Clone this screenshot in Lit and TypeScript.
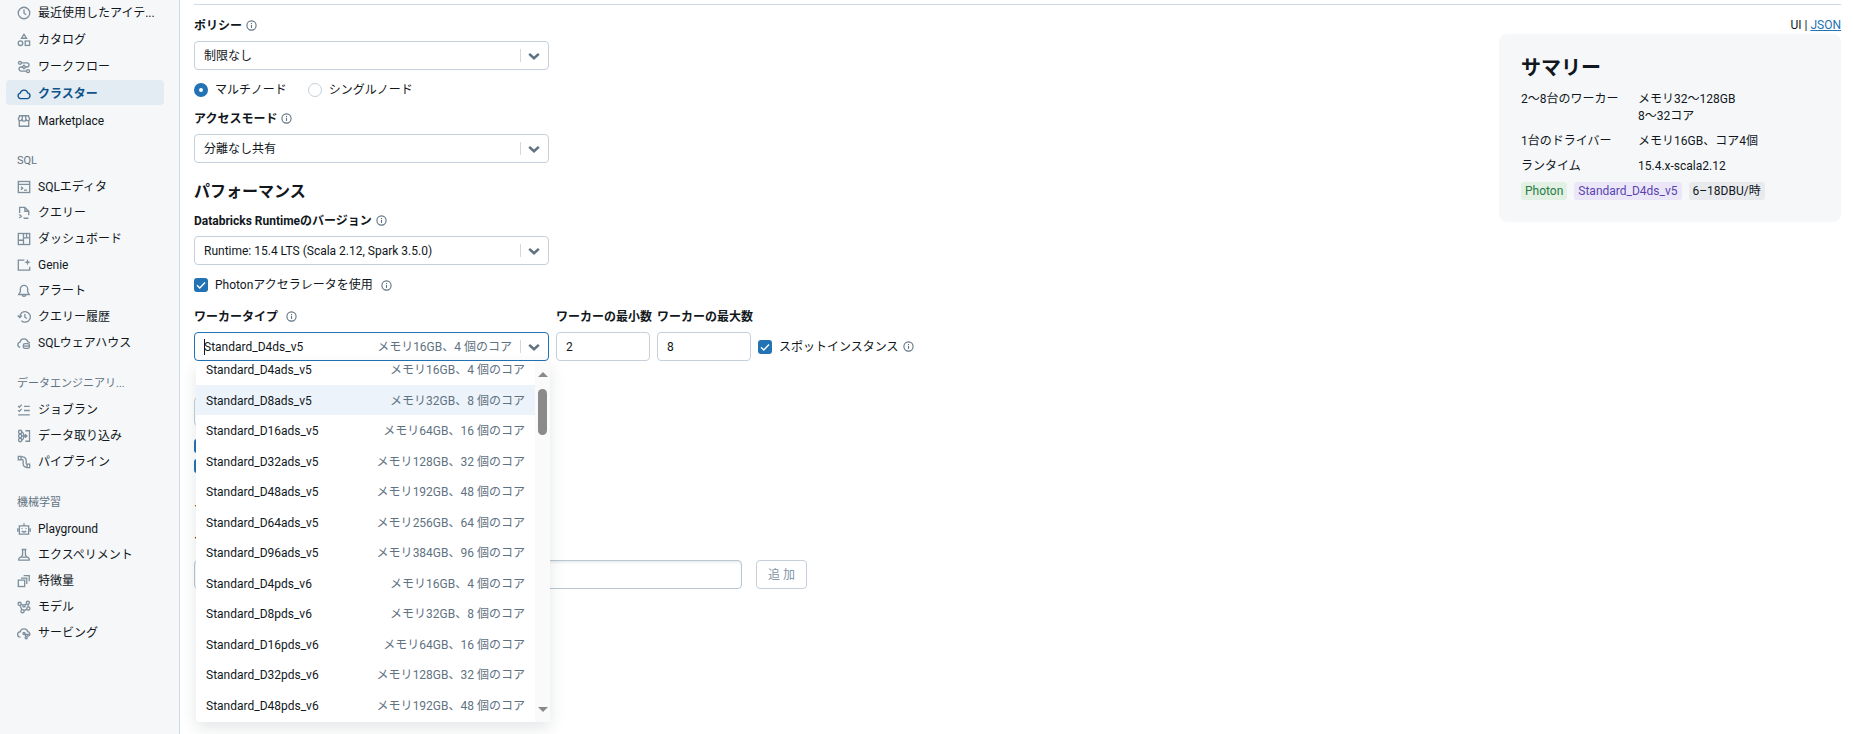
import { LitElement, html, css, svg, nothing } from "lit";
import { customElement, property, state } from "lit/decorators.js";
import { classMap } from "lit/directives/class-map.js";

const icons: Record<string, unknown> = {
  clock: svg`<circle cx="8" cy="8" r="6.6"/><path d="M8 4v4.2l2.6 1.8"/>`,
  catalog: svg`<path d="M8 1.4 10.9 6H5.100z"/><circle cx="4" cy="11.700" r="2.600"/><rect x="9.400" y="9.200" width="5" height="5"/>`,
  workflow: svg`<circle cx="3.400" cy="3.200" r="1.700"/><circle cx="12.600" cy="12.800" r="1.700"/><path d="M5.100 3.200h6.200a2.400 2.400 0 0 1 0 4.800H4.700a2.400 2.400 0 0 0 0 4.800h6.200"/><path d="m8 5.900 2.100 2.100L8 10.100 5.900 8z" fill="#f6f7f9"/>`,
  cloud: svg`<path d="M4.200 13.200a3.200 3.200 0 0 1-.5-6.300 4.400 4.400 0 0 1 8.500-.2 3.300 3.300 0 0 1-.2 6.500z"/>`,
  store: svg`<path d="M2.600 7.500V14h10.800V7.500M3 2h10l1.400 3.600a2 2 0 0 1-2.100 2 2.100 2.100 0 0 1-2.100-1.600 2.200 2.200 0 0 1-4.400 0 2.100 2.100 0 0 1-2.100 1.600 2 2 0 0 1-2.100-2zM5.800 6l.5-4M10.200 6l-.5-4"/>`,
  sql: svg`<rect x="1.500" y="1.700" width="13" height="12.600"/><path d="M1.500 5h13M4.500 7.600l2 1.700-2 1.700M8 11.600h3.500"/>`,
  query: svg`<path d="M3 8V1.500h6L13.400 6v4.500M9 1.500V6h4.400M2.600 9.800l2.400 2-2.400 2M7.500 14h5.500"/>`,
  dashboard: svg`<rect x="1.500" y="1.700" width="13" height="12.600"/><path d="M7.400 1.700v12.600M1.500 9.400h5.900M7.400 6.800h7.100M11 6.800V1.700"/>`,
  genie: svg`<path d="M8.500 2.500h-7v11.300h13V10"/><path d="M12 1.200l1 2.600 2.700 1-2.700 1-1 2.700-1-2.700-2.700-1 2.700-1z" fill="currentColor" stroke="none"/>`,
  bell: svg`<path d="M8 1.600a4.200 4.200 0 0 0-4.200 4.200v3L2 12h12l-1.800-3.200v-3A4.200 4.200 0 0 0 8 1.600zM6 12.200a2 2 0 0 0 4 0"/>`,
  history: svg`<path d="M3.200 8a6 6 0 1 1 1.800 4.200M.8 6.200 3.200 8.600l2.300-2.400M9 4.600v3.700l2.300 1.500"/>`,
  warehouse: svg`<path d="M3.600 13a3.100 3.100 0 0 1-.2-6.100 4.600 4.600 0 0 1 8.900-.4 3 3 0 0 1 2.200 1.800"/><rect x="7.200" y="8.800" width="7" height="5.400" rx="2"/><path d="M7.200 11.500h7"/>`,
  checks: svg`<path d="m1.300 3.400 1.400 1.400 2.600-2.900M1.300 8.200l1.400 1.400 2.600-2.900M8 3.800h6.600M8 8.600h6.600M1.300 13.600h13.300"/>`,
  ingest: svg`<circle cx="3.600" cy="3.300" r="1.900"/><circle cx="3.600" cy="8" r="1.900"/><circle cx="3.600" cy="12.700" r="1.900"/><path d="M5.500 3.300c2.500 0 1.500 4.700 3.500 4.700M5.500 12.700C8 12.700 7 8 9 8M5.500 8H11M9.500 2h4.800v12H9.500M9.300 6l2 2-2 2"/>`,
  pipeline: svg`<path d="M1.500 1.500h3v4h-3zM11.500 10.500h3v4h-3zM4.500 2.200h2a4 4 0 0 1 4 4v3.300a1.500 1.500 0 0 0 1 1.400M4.500 5h1a1.500 1.500 0 0 1 1.500 1.500V10a4 4 0 0 0 4.500 4"/>`,
  robot: svg`<path d="M2.700 4.400h10.600v9.400H2.700zM8 4.400V1.500M.9 7.200v4M15.100 7.200v4M5.500 10.200c1.400 1.300 3.600 1.300 5 0"/><path d="M5.700 7v1M10.300 7v1" stroke-width="1.600"/>`,
  flask: svg`<path d="M5.300 1.700h5.400M6.400 1.700v6.100L4.600 10.500h6.800L9.600 7.800V1.700M4.600 10.500c-1.700 0-2.600.9-2.600 3.300h12c0-2.400-.9-3.300-2.600-3.300"/>`,
  features: svg`<rect x="1.500" y="7" width="7.300" height="7.300"/><path d="M4.500 4.700h6.700v6.600M7.600 1.900H14v6.500"/>`,
  model: svg`<circle cx="3" cy="4.400" r="1.800"/><circle cx="12.400" cy="3.200" r="1.800"/><circle cx="13" cy="9.600" r="1.800"/><circle cx="6.300" cy="12.800" r="1.800"/><circle cx="8" cy="6.600" r="1.400"/><path d="m4.700 4.900 2 1.100M9.200 5.700l1.800-1.400M12.600 5v2.800M11.400 10.400l-3.400 1.700M3.500 6.200l2 5"/>`,
  serving: svg`<path d="M4 12.800a3.100 3.100 0 0 1-.4-6.200 4.600 4.600 0 0 1 8.800-.1 3 3 0 0 1 2.100 4"/><circle cx="8" cy="8.600" r="1.200"/><circle cx="12.800" cy="10.400" r="1.200"/><circle cx="10.500" cy="13.400" r="1.200"/><path d="m9 9.500 1.200 2.900M9.200 9l2.400.9"/>`,
  info: svg`<circle cx="8" cy="8" r="6.700"/><path d="M8 7.200v4.300" stroke-width="1.600"/><path d="M8 4.400v1.600" stroke-width="1.600"/>`,
  chevron: svg`<path d="m3.200 5.800 4.800 4.400 4.800-4.400" stroke-width="2.500"/>`,
  tick: svg`<path d="m3.400 8.300 3.200 3.100 6-6.300"/>`,
};

const icon = (name: string) => html`<svg class="icon ${name}" viewBox="0 0 16 16" fill="none"
  stroke="currentColor" stroke-width="1.5" aria-hidden="true">${icons[name]}</svg>`;

const base = css`
  * { box-sizing: border-box; }
  .icon { display: block; flex: none; width: 14px; height: 14px; }
`;

interface NavGroup { title?: string; items: [string, string][]; }

const navGroups: NavGroup[] = [
  { items: [["clock", "最近使用したアイテ..."], ["catalog", "カタログ"], ["workflow", "ワークフロー"], ["cloud", "クラスター"], ["store", "Marketplace"]] },
  { title: "SQL", items: [["sql", "SQLエディタ"], ["query", "クエリー"], ["dashboard", "ダッシュボード"], ["genie", "Genie"], ["bell", "アラート"], ["history", "クエリー履歴"], ["warehouse", "SQLウェアハウス"]] },
  { title: "データエンジニアリ...", items: [["checks", "ジョブラン"], ["ingest", "データ取り込み"], ["pipeline", "パイプライン"]] },
  { title: "機械学習", items: [["robot", "Playground"], ["flask", "エクスペリメント"], ["features", "特徴量"], ["model", "モデル"], ["serving", "サービング"]] },
];

@customElement("side-nav")
class SideNav extends LitElement {
  @property() active = "";

  static styles = [base, css`
    :host { display: block; width: 180px; flex: none; background: #f6f7f9; border-right: 1px solid #d1d9e1; padding: 0 15px 0 6px; }
    nav { margin-top: -1px; }
    ul { list-style: none; margin: 0; padding: 0; }
    .group { margin-bottom: 15px; }
    .top { display: grid; gap: 2px; }
    .title { margin: 0; padding: 2px 0 0 11px; font-size: 11px; font-weight: 400; line-height: 24px; color: #5f7281; }
    .item { display: flex; align-items: center; gap: 7px; height: 26px; padding: 2px 0 0 11px; border-radius: 4px; color: #11171c; text-decoration: none; white-space: nowrap; }
    .top .item { height: 25px; }
    .item .icon { color: #7d8f9c; }
    .item.active { background: #e4ecf3; color: #0e538b; font-weight: 700; }
    .item.active .icon { color: #0e538b; }
  `];

  render() {
    return html`<nav>
      ${navGroups.map((g) => html`<div class="group">
        ${g.title ? html`<h2 class="title">${g.title}</h2>` : nothing}
        <ul class=${classMap({ top: !g.title })}>
          ${g.items.map(([i, label]) => html`<li>
            <a href="#" class=${classMap({ item: true, active: label === this.active })}>${icon(i)}<span>${label}</span></a>
          </li>`)}
        </ul>
      </div>`)}
    </nav>`;
  }
}

@customElement("cluster-summary")
class ClusterSummary extends LitElement {
  static styles = [base, css`
    :host { display: block; background: #f6f7f9; border-radius: 8px; padding: 19px 22px 22px; }
    h2 { margin: 0 0 8px; font-size: 20px; line-height: 30px; }
    dl { display: grid; grid-template-columns: 109px 1fr; gap: 8px; margin: 0 0 7px; line-height: 17px; }
    dd { margin: 0; }
    .tags { display: flex; gap: 7px; }
    .tag { padding: 0 4px; border-radius: 3px; line-height: 18px; }
    .green { background: #e2f1e4; color: #277c43; }
    .purple { background: #ebe7f8; color: #5b44b0; }
    .gray { background: #e8eaee; color: #11171c; }
  `];

  render() {
    return html`
      <h2>サマリー</h2>
      <dl>
        <dt>2～8台のワーカー</dt><dd>メモリ32～128GB<br>8～32コア</dd>
        <dt>1台のドライバー</dt><dd>メモリ16GB、コア4個</dd>
        <dt>ランタイム</dt><dd>15.4.x-scala2.12</dd>
      </dl>
      <div class="tags">
        <span class="tag green">Photon</span>
        <span class="tag purple">Standard_D4ds_v5</span>
        <span class="tag gray">6–18DBU/時</span>
      </div>`;
  }
}

const nodeTypes: [string, number, number][] = [
  ["Standard_D4ads_v5", 16, 4], ["Standard_D8ads_v5", 32, 8], ["Standard_D16ads_v5", 64, 16],
  ["Standard_D32ads_v5", 128, 32], ["Standard_D48ads_v5", 192, 48], ["Standard_D64ads_v5", 256, 64],
  ["Standard_D96ads_v5", 384, 96], ["Standard_D4pds_v6", 16, 4], ["Standard_D8pds_v6", 32, 8],
  ["Standard_D16pds_v6", 64, 16], ["Standard_D32pds_v6", 128, 32], ["Standard_D48pds_v6", 192, 48],
];

@customElement("app-root")
class AppRoot extends LitElement {
  @state() private highlighted = 1;

  static styles = [base, css`
    :host { display: flex; min-height: 100vh; background: #fff; color: #11171c; font: 12px/20px Roboto, "Noto Sans CJK JP", sans-serif; overflow: hidden; }
    main { flex: 1; min-width: 0; height: 100vh; padding: 4px 12px 0 14px; }
    .columns { display: grid; grid-template-columns: minmax(0, 1fr) 342px; border-top: 1px solid #d1d9e1; padding-top: 10px; }
    .switch { padding-top: 2px; text-align: right; line-height: 17px; }
    .switch a { color: #2272b4; text-decoration: underline; }

    .form { display: flex; flex-direction: column; gap: 10px; }
    .field { display: grid; grid-template-columns: minmax(0, 1fr); gap: 6px; width: 355px; }
    .label { display: flex; align-items: center; gap: 4px; height: 20px; padding-top: 1px; font-weight: 700; white-space: nowrap; }
    .info { width: 11px; height: 11px; color: #5f7281; }
    .wide { gap: 8px; }
    h2 { margin: 5px 0 -6px; font-size: 16px; line-height: 28px; }

    .control { display: grid; align-items: center; }
    .control > * { grid-area: 1 / 1; }
    select, input, button { font: inherit; color: inherit; margin: 0; }
    select, .text { appearance: none; width: 100%; height: 29px; padding: 0 9px; background: #fff; border: 1px solid #c5d0da; border-radius: 4px; outline: none; }
    .focused { border-color: #2272b4; }
    .arrow { justify-self: end; display: flex; align-items: center; gap: 5px; padding-right: 7px; color: #5f7281; pointer-events: none; }
    .arrow::before { content: ""; width: 1px; height: 13px; background: #d1d9e1; }
    .arrow .icon { width: 16px; height: 16px; }
    .hint { justify-self: end; padding-right: 37px; color: #5f7281; }
    .caret { width: 1px; height: 16px; margin-left: 10px; background: #11171c; }

    .options { display: flex; gap: 21px; margin-bottom: -2px; }
    .option { display: flex; align-items: center; gap: 7px; height: 20px; white-space: nowrap; }
    .option .info { margin-left: 1px; }
    .tickbox { display: grid; width: 14px; height: 14px; color: #fff; }
    .tickbox > * { grid-area: 1 / 1; pointer-events: none; }
    .tickbox input { pointer-events: auto; appearance: none; width: 14px; height: 14px; border-radius: 3px; background: #2272b4; }
    .radio { appearance: none; width: 14px; height: 14px; border: 1px solid #c5d0da; border-radius: 50%; background: #fff; }
    .radio:checked { border: 5px solid #2272b4; }

    .group { display: grid; }
    .workers { display: flex; align-items: flex-end; gap: 7px; margin-top: 1px; }
    .worker-type { position: relative; }
    .number { width: 94px; }
    .spot { height: 29px; }
    .spot .info { margin-left: -3px; }

    .menu { position: absolute; z-index: 2; top: 55px; left: 2px; width: 354px; height: 361px; display: flex; overflow: hidden; background: #fff; border-radius: 0 0 4px 4px; }
    .shade { position: absolute; z-index: 1; top: 55px; left: 2px; width: 354px; height: 361px; border-radius: 4px; box-shadow: 0 6px 16px rgba(27, 49, 57, 0.12); }
    .list { flex: 1; display: grid; grid-auto-rows: 1fr; height: 366px; margin: -7px 0 0; padding: 0; list-style: none; line-height: 16px; }
    .row { display: flex; align-items: center; justify-content: space-between; padding: 2px 10px 0; white-space: nowrap; }
    .row.on { background: #edf3fa; }
    .row .spec { color: #5f7281; }
    .scroll { width: 15px; display: flex; flex-direction: column; align-items: center; padding: 11px 0 10px; background: #fafafa; }
    .up, .down { border: 5px solid transparent; }
    .up { border-top: 0; border-bottom-color: #8a8a8a; }
    .down { border-bottom: 0; border-top-color: #8a8a8a; margin-top: auto; }
    .thumb { width: 9px; height: 46px; margin-top: 12px; border-radius: 5px; background: #8a8a8a; }

    .tag-title { margin-top: 7px; }
    .tag-field { gap: 12px; margin-top: 3px; }
    .tags { display: flex; gap: 14px; }
    .pair { flex: none; display: grid; grid-template-columns: 1fr 1fr; gap: 8px; width: 548px; }
    .pair .text { box-shadow: inset 0 2px 2px rgba(27, 49, 57, 0.08); border-color: #b9c7d3; }
    .add { flex: none; height: 29px; padding: 0 11px; border: 1px solid #c5d0da; border-radius: 4px; background: #fff; color: #8396a5; white-space: pre; }
  `];

  private info() {
    return html`<svg class="info" viewBox="0 0 16 16" fill="none" stroke="currentColor" stroke-width="1.6" aria-hidden="true">${icons.info}</svg>`;
  }

  private arrow() {
    return html`<span class="arrow">${icon("chevron")}</span>`;
  }

  private select(id: string, label: string, value: string, info = true) {
    return html`<div class="field">
      <label class="label" for=${id}>${label}${info ? this.info() : nothing}</label>
      <div class="control"><select id=${id}><option>${value}</option></select>${this.arrow()}</div>
    </div>`;
  }

  private tick(label: string, info = false, extra = "") {
    return html`<label class="option ${extra}">
      <span class="tickbox"><input type="checkbox" checked>${icon("tick")}</span>${label}${info ? this.info() : nothing}
    </label>`;
  }

  private workers() {
    return html`<div class="workers">
      <div class="field worker-type">
        <label class="label wide" for="worker">ワーカータイプ${this.info()}</label>
        <div class="control">
          <input id="worker" class="text focused" role="combobox" aria-expanded="true" aria-controls="types" value="Standard_D4ds_v5">
          <span class="caret"></span>
          <span class="hint">メモリ16GB、4 個のコア</span>
          ${this.arrow()}
        </div>
        <div class="shade"></div>
        <div class="menu">
          <ul class="list" id="types" role="listbox">
            ${nodeTypes.map(([name, memory, cores], i) => html`<li role="option"
              class=${classMap({ row: true, on: i === this.highlighted })}
              @mouseenter=${() => (this.highlighted = i)}>
              <span>${name}</span><span class="spec">メモリ${memory}GB、${cores} 個のコア</span>
            </li>`)}
          </ul>
          <div class="scroll"><span class="up"></span><span class="thumb"></span><span class="down"></span></div>
        </div>
      </div>
      <div class="field number"><label class="label" for="min">ワーカーの最小数</label><input id="min" class="text" value="2"></div>
      <div class="field number"><label class="label" for="max">ワーカーの最大数</label><input id="max" class="text" value="8"></div>
      ${this.tick("スポットインスタンス", true, "spot")}
    </div>`;
  }

  render() {
    return html`
      <side-nav active="クラスター"></side-nav>
      <main>
        <div class="columns">
          <form class="form">
            ${this.select("policy", "ポリシー", "制限なし")}
            <div class="options">
              <label class="option"><input class="radio" type="radio" name="nodes" checked>マルチノード</label>
              <label class="option"><input class="radio" type="radio" name="nodes">シングルノード</label>
            </div>
            ${this.select("access", "アクセスモード", "分離なし共有")}
            <h2>パフォーマンス</h2>
            ${this.select("runtime", "Databricks Runtimeのバージョン", "Runtime: 15.4 LTS (Scala 2.12, Spark 3.5.0)")}
            ${this.tick("Photonアクセラレータを使用", true)}
            ${this.workers()}
            ${this.select("driver", "ド", "", false)}
            <div class="group">${this.tick("")}${this.tick("")}</div>
            <h2 class="tag-title">タグ</h2>
            <div class="field tag-field">
              <label class="label" for="key">タグ</label>
              <div class="tags">
                <div class="pair"><input id="key" class="text"><input class="text" aria-label="値"></div>
                <button type="button" class="add" disabled>追 加</button>
              </div>
            </div>
          </form>
          <aside>
            <div class="switch">UI | <a href="#">JSON</a></div>
            <cluster-summary></cluster-summary>
          </aside>
        </div>
      </main>`;
  }
}
